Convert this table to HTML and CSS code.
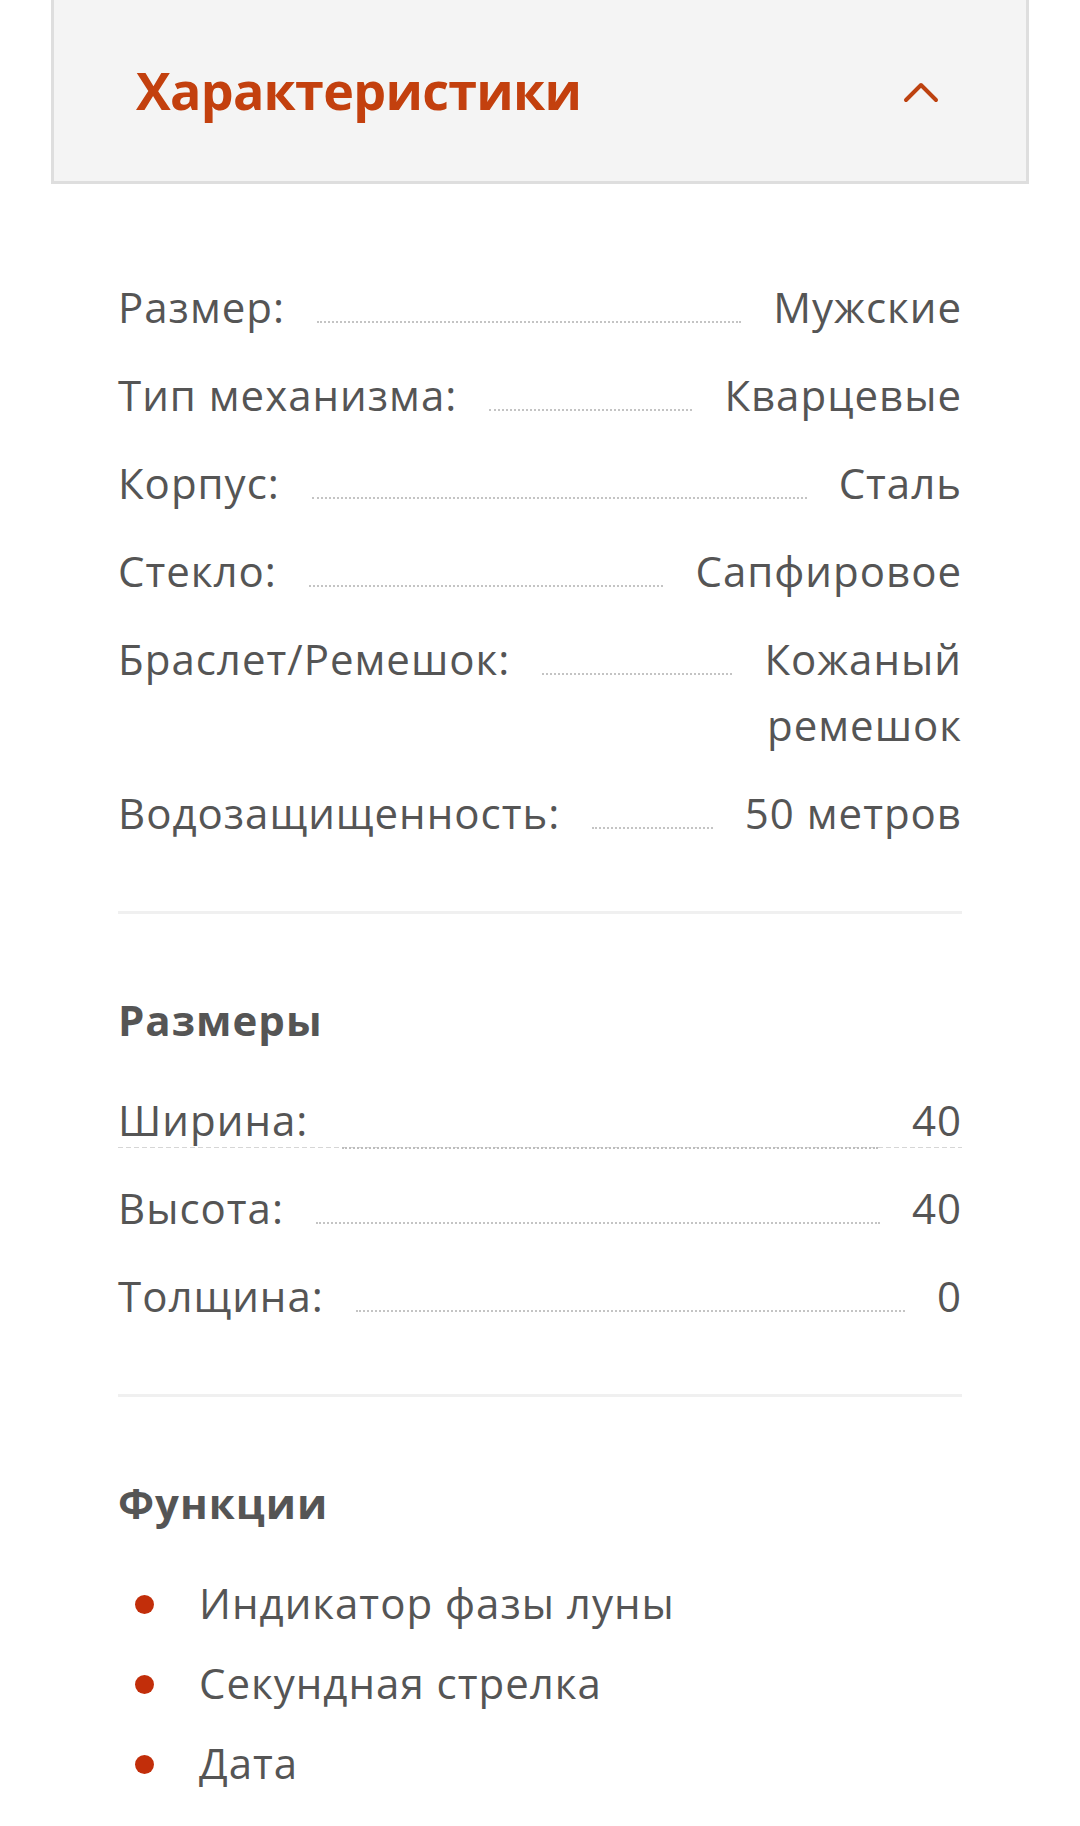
FILE: index.html
```html
<!DOCTYPE html>
<html lang="ru">
<head>
<meta charset="utf-8">
<title>Характеристики</title>
<link rel="stylesheet" href="styles.css">
</head>
<body>
<div class="panel-header">
  <h2 class="panel-title">Характеристики</h2>
  <svg class="chevron" width="36" height="22" viewBox="0 0 36 22" aria-hidden="true">
    <polyline points="3,19 18,4 33,19" fill="none" stroke="#bd4210" stroke-width="4" stroke-linecap="round" stroke-linejoin="round"/>
  </svg>
</div>

<div class="specs">
  <div class="group">
    <div class="row"><span class="label">Размер:</span><span class="leader"></span><span class="value">Мужские</span></div>
    <div class="row"><span class="label">Тип механизма:</span><span class="leader"></span><span class="value">Кварцевые</span></div>
    <div class="row"><span class="label">Корпус:</span><span class="leader"></span><span class="value">Сталь</span></div>
    <div class="row"><span class="label">Стекло:</span><span class="leader"></span><span class="value">Сапфировое</span></div>
    <div class="row"><span class="label">Браслет/Ремешок:</span><span class="leader"></span><span class="value value-wrap">Кожаный ремешок</span></div>
    <div class="row"><span class="label">Водозащищенность:</span><span class="leader"></span><span class="value">50 метров</span></div>
  </div>

  <hr class="sep">

  <div class="group">
    <h3 class="group-title">Размеры</h3>
    <div class="row row-underlined"><span class="label">Ширина:</span><span class="leader leader-low"></span><span class="value">40</span></div>
    <div class="row"><span class="label">Высота:</span><span class="leader"></span><span class="value">40</span></div>
    <div class="row"><span class="label">Толщина:</span><span class="leader"></span><span class="value">0</span></div>
  </div>

  <hr class="sep">

  <div class="group">
    <h3 class="group-title">Функции</h3>
    <ul class="features">
      <li class="feature"><span class="dot"></span><span>Индикатор фазы луны</span></li>
      <li class="feature"><span class="dot"></span><span>Секундная стрелка</span></li>
      <li class="feature"><span class="dot"></span><span>Дата</span></li>
    </ul>
  </div>
</div>
</body>
</html>
```

FILE: styles.css
```css
html, body {
  margin: 0;
  padding: 0;
  background: #ffffff;
}

body {
  font-family: "Open Sans", "Noto Sans", "DejaVu Sans", sans-serif;
  color: #555555;
  width: 1080px;
}

.panel-header {
  margin: 0 51px;
  background: #f4f4f4;
  border: 3px solid #dedede;
  border-top: none;
  padding: 55px 87px 56px 82px;
  display: flex;
  align-items: center;
  justify-content: space-between;
}

.panel-title {
  margin: 0;
  font-size: 52px;
  line-height: 70px;
  font-weight: 700;
  letter-spacing: -0.7px;
  color: #c3400e;
}

.chevron {
  display: block;
  margin-top: 3px;
}

.specs {
  padding: 90px 118px 0;
}

.group {
  display: flex;
  flex-direction: column;
  gap: 22px;
}

.row {
  display: flex;
  align-items: baseline;
  font-size: 42px;
  line-height: 66px;
  letter-spacing: 1px;
}

.label {
  flex: none;
  white-space: nowrap;
}

.leader {
  flex: 1 1 0;
  min-width: 40px;
  height: 0;
  margin: 0 32px;
  border-bottom: 2px dotted #c4c4c4;
}

.value {
  flex: 0 1 auto;
  text-align: right;
}

.value-wrap {
  width: min-content;
}

.row-underlined {
  align-items: flex-start;
  background-image: repeating-linear-gradient(to right, #d6d6d6 0 5px, transparent 5px 8px);
  background-repeat: no-repeat;
  background-size: 100% 1px;
  background-position: left 0 bottom 5px;
}

.leader-low {
  align-self: flex-end;
  margin-bottom: 4px;
  margin-left: 34px;
  margin-right: 34px;
  border-bottom-color: #bdbdbd;
}

.sep {
  margin: 65px 0 73px;
  border: none;
  height: 3px;
  background: #f0f0f0;
}

.group-title {
  margin: 0 0 12px;
  font-size: 42px;
  line-height: 66px;
  font-weight: 700;
  letter-spacing: 1px;
  color: #555555;
}

.features {
  list-style: none;
  margin: 0;
  padding: 0;
  display: flex;
  flex-direction: column;
  gap: 14px;
}

.feature {
  display: flex;
  align-items: center;
  font-size: 42px;
  line-height: 66px;
  letter-spacing: 1px;
}

.dot {
  flex: none;
  width: 19px;
  height: 19px;
  border-radius: 50%;
  background: #c22e0a;
  margin: 2px 45px 0 17px;
}
```
